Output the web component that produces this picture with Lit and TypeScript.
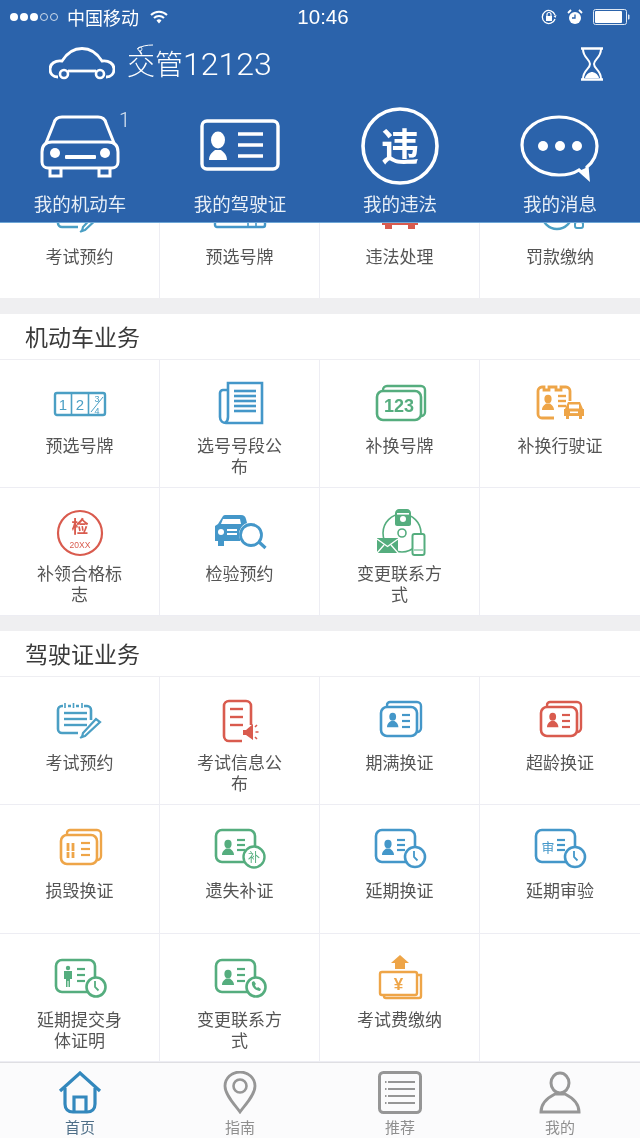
import { LitElement, html, css, svg } from "lit";
import { customElement } from "lit/decorators.js";

const lines = (x1: number, x2: number, ys: number[], w = 2.4) =>
  ys.map((y) => svg`<line x1=${x1} x2=${x2} y1=${y} y2=${y} stroke="currentColor" stroke-width=${w}/>`);

const person = (x: number, y: number, s = 1) => svg`
  <g transform="translate(${x} ${y}) scale(${s})" fill="currentColor">
    <ellipse cx="6" cy="4" rx="3.6" ry="4.2"/>
    <path d="M0 15c0-4 3-5.5 4-6.5h4c1 1 4 2.5 4 6.5z"/>
  </g>`;

const badgeClock = (cx: number, cy: number, r = 10) => svg`
  <circle cx=${cx} cy=${cy} r=${r} fill="#fff" stroke="currentColor" stroke-width="2.6"/>
  <path d="M${cx - 1} ${cy - 6}v6l3.5 3.5" fill="none" stroke="currentColor" stroke-width="1.8"/>`;

const idCard = (inner: unknown, x = 6, y = 5, w = 40, h = 32) => svg`
  <rect x=${x} y=${y} width=${w} height=${h} rx="6" fill="#fff" stroke="currentColor" stroke-width="2.6"/>${inner}`;

const stack = (inner: unknown) => svg`
  <path d="M17 9V7a3 3 0 0 1 3-3h27a4 4 0 0 1 4 4v22a4 4 0 0 1-4 4h-2" fill="none" stroke="currentColor" stroke-width="2.4"/>
  <rect x="11" y="9" width="36" height="29" rx="6" fill="#fff" stroke="currentColor" stroke-width="2.6"/>${inner}`;

const smallCar = (x: number, y: number, fill: string) => svg`
  <g transform="translate(${x} ${y})" fill=${fill}>
    <path d="M4 0h12l3 7h1v7h-2v3h-3v-3H5v3H2v-3H0V7h1z"/>
    <rect x="5" y="2.5" width="10" height="4" fill="#fff"/>
    <rect x="6" y="9.5" width="8" height="1.6" fill="#fff"/>
  </g>`;

const ICONS: Record<string, unknown> = {
  plate: svg`
    <rect x="5" y="12" width="50" height="22" rx="2" fill="none" stroke="currentColor" stroke-width="2.4"/>
    <path d="M21.5 12v22M38.5 12v22" stroke="currentColor" stroke-width="1.6"/>
    <text x="13" y="29" class="t-mono" font-size="15" text-anchor="middle" fill="currentColor">1</text>
    <text x="30" y="29" class="t-mono" font-size="15" text-anchor="middle" fill="currentColor">2</text>
    <text x="47" y="21" class="t-mono" font-size="9" text-anchor="middle" fill="currentColor">3</text>
    <text x="47" y="33" class="t-mono" font-size="9" text-anchor="middle" fill="currentColor">4</text>
    <path d="M41 31l12-15" stroke="currentColor" stroke-width="1"/>`,
  news: svg`
    <path d="M18 9h-5a3 3 0 0 0-3 3v24c0 4 3 6 6 6h36V2H18v34c0 3-1 5-3 6" fill="none" stroke="currentColor" stroke-width="2.6"/>
    ${lines(24, 46, [10, 15, 20, 25, 30], 2.6)}`,
  num: svg`
    <path d="M13 10V9a4 4 0 0 1 4-4h34a4 4 0 0 1 4 4v22a4 4 0 0 1-4 4h-1" fill="none" stroke="currentColor" stroke-width="2.4"/>
    <rect x="7" y="10" width="44" height="29" rx="6" fill="#fff" stroke="currentColor" stroke-width="2.6"/>
    <text x="29" y="31" class="t-sans" font-size="18" font-weight="700" text-anchor="middle" fill="currentColor">123</text>`,
  licence: svg`
    <path d="M24 37H12a4 4 0 0 1-4-4V10a4 4 0 0 1 4-4h2v3h5V6h7v3h5V6h5a4 4 0 0 1 4 4v10" fill="none" stroke="currentColor" stroke-width="2.8"/>
    ${person(12, 14, 1)}
    ${lines(28, 36, [15, 20, 25], 2.4)}
    ${smallCar(34, 21, "currentColor")}`,
  stamp: svg`
    <circle cx="30" cy="24" r="22" fill="none" stroke="currentColor" stroke-width="2.2"/>
    <text x="30" y="24" class="t-cjk" font-size="17" font-weight="700" text-anchor="middle" fill="currentColor">检</text>
    <text x="30" y="38.500" class="t-sans" font-size="8.500" text-anchor="middle" fill="currentColor">20XX</text>`,
  carSearch: svg`
    <path d="M13 7a3 3 0 0 1 3-1h15c3 0 4 1 5 4l1 4a12 12 0 0 0-7 16v2H14v5H8v-5H5V17l3-2z" fill="currentColor"/>
    <path d="M13 10h17l1 5H11z" fill="#fff"/>
    <circle cx="11" cy="23" r="3" fill="#fff"/>
    <rect x="17" y="20" width="10" height="2" fill="#fff"/>
    <rect x="17" y="24" width="10" height="2" fill="#fff"/>
    <circle cx="41" cy="26" r="10.500" fill="#fff" stroke="currentColor" stroke-width="2.800"/>
    <path d="M49 33l6.500 6" stroke="currentColor" stroke-width="3.200"/>`,
  contact: svg`
    <circle cx="32" cy="24" r="19" fill="none" stroke="currentColor" stroke-width="1.600"/>
    <path d="M25 4c0-2 2-4 4-4h8c2 0 4 2 4 4v11c0 1-1 2-2 2H27c-1 0-2-1-2-2z" fill="currentColor"/>
    <rect x="27" y="4" width="12" height="1.600" fill="#fff"/>
    <circle cx="33" cy="10" r="3" fill="#fff"/>
    <circle cx="32" cy="24" r="4" fill="#fff" stroke="currentColor" stroke-width="1.600"/>
    <rect x="7" y="29" width="21" height="15" fill="currentColor"/>
    <path d="M7 30l10.500 7.500L28 30M7 44l7-8M28 44l-7-8" fill="none" stroke="#fff" stroke-width="1.300"/>
    <rect x="42.500" y="25" width="12" height="21" rx="2" fill="#fff" stroke="currentColor" stroke-width="2"/>
    <path d="M44 41h9" stroke="currentColor" stroke-width="1"/>`,
  notepad: svg`
    <path d="M13 8H12a4 4 0 0 0-4 4v19a4 4 0 0 0 4 4h16M18 8h3M26 8h3M34 8h3a4 4 0 0 1 4 4v10" fill="none" stroke="currentColor" stroke-width="2.6"/>
    <path d="M15 5v5M23.500 5v5M32 5v5" stroke="currentColor" stroke-width="1.6"/>
    ${lines(14, 37, [15, 21, 27], 2.4)}
    <path d="M35 38l-3 1 1-4 13-14 4 3z" fill="none" stroke="currentColor" stroke-width="2.200"/>
    <path d="M30 40l2-2" stroke="currentColor" stroke-width="1.500"/>`,
  doc: svg`
    <path d="M32 43H19a5 5 0 0 1-5-5V8a5 5 0 0 1 5-5h17a5 5 0 0 1 5 5v19" fill="none" stroke="currentColor" stroke-width="2.6"/>
    ${lines(20, 33, [11, 19, 27], 2.4)}
    <path d="M33 32h3l7-6v16l-7-5h-3z" fill="currentColor"/>
    <path d="M45 29l2-2M45.500 34h3M45 39l2 2" stroke="currentColor" stroke-width="1.600"/>`,
  idBlue: stack(svg`${person(17, 15, 0.95)}${lines(32, 40, [17, 23, 29], 2.2)}`),
  idRed: stack(svg`${person(17, 15, 0.95)}${lines(32, 40, [17, 23, 29], 2.2)}`),
  broken: stack(svg`
    <path d="M18 17v15M23 17v15" stroke="currentColor" stroke-width="2.8" stroke-dasharray="8 1"/>
    ${lines(31, 40, [17, 23, 29], 2.2)}`),
  idBu: svg`${idCard(svg`${person(12, 14, 1)}${lines(27, 35, [14, 19, 24], 2.2)}`, 6, 4, 39, 32)}
    <circle cx="44" cy="31" r="10.500" fill="#fff" stroke="currentColor" stroke-width="2.400"/>
    <text x="44" y="35.500" class="t-cjk" font-size="12" text-anchor="middle" fill="currentColor">补</text>`,
  idClock: svg`${idCard(svg`${person(12, 14, 1)}${lines(27, 35, [14, 19, 24], 2.2)}`, 6, 4, 39, 32)}${badgeClock(45, 31)}`,
  idShen: svg`${idCard(svg`
    <text x="18" y="26" class="t-cjk" font-size="13" text-anchor="middle" fill="currentColor">审</text>
    ${lines(27, 35, [14, 19, 24], 2.2)}`, 6, 4, 39, 32)}${badgeClock(45, 31)}`,
  idBody: svg`${idCard(svg`
    <g fill="currentColor"><circle cx="18" cy="13" r="2.200"/><path d="M14 16h8v8h-2v8h-1.500v-6h-1v6H16v-8h-2z"/></g>
    ${lines(27, 35, [14, 20, 26], 2.2)}`, 6, 5, 39, 32)}${badgeClock(46, 32, 9.500)}`,
  idPhone: svg`${idCard(svg`${person(12, 15, 1)}${lines(27, 35, [14, 20, 26], 2.2)}`, 6, 5, 39, 32)}
    <circle cx="46" cy="32" r="9.500" fill="#fff" stroke="currentColor" stroke-width="2.600"/>
    <path d="M42 27c-1 4 3 9 8 9l1-2-3-2-1 1c-1-1-2-2-2-3l1-1-2-3z" fill="currentColor"/>`,
  money: svg`
    <path d="M30 0l9 8h-4v6H25V8h-4z" fill="currentColor"/>
    <path d="M47 20h4v21a2 2 0 0 1-2 2H16a2 2 0 0 1-2-2v-1" fill="none" stroke="currentColor" stroke-width="2.400"/>
    <rect x="10" y="17" width="37" height="23" rx="2" fill="#fff" stroke="currentColor" stroke-width="2.400"/>
    <text x="28.500" y="35" class="t-sans" font-size="17" font-weight="700" text-anchor="middle" fill="currentColor">¥</text>`,
  topPlate: svg`
    <rect x="5" y="12" width="50" height="23" rx="2" fill="none" stroke="currentColor" stroke-width="2.4"/>
    <path d="M38 28v7M46 28v7" stroke="currentColor" stroke-width="1.600"/>`,
  topCar: svg`
    <path d="M12 26h36v7h-3v4h-7v-4H22v4h-7v-4h-3z" fill="currentColor"/>`,
  topFine: svg`
    <circle cx="27" cy="22" r="15" fill="none" stroke="currentColor" stroke-width="2.400"/>
    <rect x="45" y="30" width="8" height="6" rx="2" fill="none" stroke="currentColor" stroke-width="2"/>`,
};
ICONS.topPad = ICONS.notepad;

type Cell = { icon: string; color: string; label: string } | null;

const TOP: Cell[] = [
  { icon: "topPad", color: "c-teal", label: "考试预约" },
  { icon: "topPlate", color: "c-blue", label: "预选号牌" },
  { icon: "topCar", color: "c-red", label: "违法处理" },
  { icon: "topFine", color: "c-teal", label: "罚款缴纳" },
];
const VEHICLE: Cell[] = [
  { icon: "plate", color: "c-teal", label: "预选号牌" },
  { icon: "news", color: "c-blue", label: "选号号段公布" },
  { icon: "num", color: "c-green", label: "补换号牌" },
  { icon: "licence", color: "c-orange", label: "补换行驶证" },
  { icon: "stamp", color: "c-red", label: "补领合格标志" },
  { icon: "carSearch", color: "c-blue", label: "检验预约" },
  { icon: "contact", color: "c-green", label: "变更联系方式" },
  null,
];
const DRIVER: Cell[] = [
  { icon: "notepad", color: "c-teal", label: "考试预约" },
  { icon: "doc", color: "c-red", label: "考试信息公布" },
  { icon: "idBlue", color: "c-blue", label: "期满换证" },
  { icon: "idRed", color: "c-red", label: "超龄换证" },
  { icon: "broken", color: "c-orange", label: "损毁换证" },
  { icon: "idBu", color: "c-green", label: "遗失补证" },
  { icon: "idClock", color: "c-blue", label: "延期换证" },
  { icon: "idShen", color: "c-blue", label: "延期审验" },
  { icon: "idBody", color: "c-green", label: "延期提交身体证明" },
  { icon: "idPhone", color: "c-green", label: "变更联系方式" },
  { icon: "money", color: "c-orange", label: "考试费缴纳" },
  null,
];

const NAV = [
  {
    label: "我的机动车",
    icon: svg`
      <path d="M11 33l8-20c1-4 4-6 8-6h36c4 0 7 2 8 6l8 20" fill="none" stroke="#fff" stroke-width="3"/>
      <path d="M7 42c0-6 3-10 10-10h56c7 0 10 4 10 10v10c0 4-3 6-6 6H13c-3 0-6-2-6-6z" fill="none" stroke="#fff" stroke-width="3"/>
      <circle cx="20" cy="43" r="5" fill="#fff"/><circle cx="70" cy="43" r="5" fill="#fff"/>
      <rect x="30" y="45" width="31" height="4" rx="1" fill="#fff"/>
      <path d="M15 58v8h11v-8M64 58v8h11v-8" fill="none" stroke="#fff" stroke-width="3"/>`,
  },
  {
    label: "我的驾驶证",
    icon: svg`
      <rect x="7" y="11" width="76" height="48" rx="5" fill="none" stroke="#fff" stroke-width="3.4"/>
      <ellipse cx="23" cy="30" rx="7" ry="8.500" fill="#fff"/>
      <path d="M14 50c0-6 4-8 6-10h6c2 2 6 4 6 10z" fill="#fff"/>
      <path d="M43 24h25M43 35h25M43 46h25" stroke="#fff" stroke-width="3.400"/>`,
  },
  {
    label: "我的违法",
    icon: svg`
      <circle cx="45" cy="36" r="37" fill="none" stroke="#fff" stroke-width="3.600"/>
      <text x="45" y="50" class="t-cjk" font-size="38" font-weight="700" text-anchor="middle" fill="#fff">违</text>`,
  },
  {
    label: "我的消息",
    icon: svg`
      <path d="M64 60c-6 4-13 5-20 5-20 0-37-13-37-30S24 7 44 7s38 13 38 29c0 9-4 16-10 21l1 11z" fill="none" stroke="#fff" stroke-width="3.200"/>
      <path d="M64 61l9-4 1 11z" fill="#fff"/>
      <circle cx="28" cy="36" r="5" fill="#fff"/><circle cx="45" cy="36" r="5" fill="#fff"/><circle cx="62" cy="36" r="5" fill="#fff"/>`,
  },
];

const TABS = [
  {
    label: "首页",
    on: true,
    icon: svg`
      <path d="M3 20L23 2l20 18" fill="none" stroke="currentColor" stroke-width="3.200"/>
      <path d="M8 17v16c0 5 3 8 8 8h14c5 0 8-3 8-8V17" fill="none" stroke="currentColor" stroke-width="3.200"/>
      <path d="M17 41V26h12v15" fill="none" stroke="currentColor" stroke-width="3.200"/>`,
  },
  {
    label: "指南",
    on: false,
    icon: svg`
      <path d="M23 41C18 34 8 24 8 15a15 14 0 0 1 30 0c0 9-10 19-15 26z" fill="none" stroke="currentColor" stroke-width="2.800"/>
      <circle cx="23" cy="15" r="6.500" fill="none" stroke="currentColor" stroke-width="2.600"/>`,
  },
  {
    label: "推荐",
    on: false,
    icon: svg`
      <rect x="2.500" y="1.500" width="41" height="40" rx="4" fill="none" stroke="currentColor" stroke-width="3"/>
      <path d="M11 11h27M11 18h27M11 25h27M11 32h27" stroke="currentColor" stroke-width="2.200"/>
      <path d="M8 11h1.500M8 18h1.500M8 25h1.500M8 32h1.500" stroke="currentColor" stroke-width="2.200"/>`,
  },
  {
    label: "我的",
    on: false,
    icon: svg`
      <ellipse cx="23" cy="12" rx="9" ry="10" fill="none" stroke="currentColor" stroke-width="3"/>
      <path d="M4 41c0-10 8-15 14-18h10c6 3 14 8 14 18z" fill="none" stroke="currentColor" stroke-width="3"/>`,
  },
];

@customElement("app-root")
export class AppRoot extends LitElement {
  static styles = css`
    :host {
      display: flex;
      flex-direction: column;
      width: 640px;
      height: 1138px;
      overflow: hidden;
      background: #fff;
      font-family: "Noto Sans CJK SC", "Noto Sans", sans-serif;
      filter: blur(0.4px);
    }
    .t-cjk { font-family: "Noto Sans CJK SC", sans-serif; }
    .t-sans { font-family: "Liberation Sans", sans-serif; }
    .t-mono { font-family: "Liberation Sans", sans-serif; }
    header {
      flex: none;
      height: 222px;
      background: #2b63ab;
      border-bottom: 1px solid #6ea6d6;
      color: #fff;
      display: flex;
      flex-direction: column;
    }
    .status {
      height: 34px;
      padding: 0 10px 0 10px;
      display: grid;
      grid-template-columns: 1fr auto 1fr;
      align-items: center;
    }
    .status-left { display: flex; align-items: center; gap: 2px; font-size: 18px; }
    .dot { width: 8px; height: 8px; border-radius: 50%; background: #fff; box-sizing: border-box; }
    .dot.off { background: none; border: 1px solid #cfdcec; }
    .carrier { margin: 0 9px 0 7px; line-height: 24px; }
    .time { font: 20.500px "Liberation Sans", sans-serif; padding-left: 6px; }
    .status-right { display: flex; justify-content: flex-end; align-items: center; gap: 10px; }
    .brand {
      height: 60px;
      padding: 0 35px 0 49px;
      display: flex;
      align-items: center;
    }
    .title {
      position: relative;
      margin-left: 12px;
      font-size: 28px;
      line-height: 38px;
      padding-bottom: 2px;
      font-weight: 300;
      flex: 1;
    }
    .title b { font: 300 32px Roboto, sans-serif; }
    .swoosh { position: absolute; left: 9px; top: 0; }
    .nav { display: grid; grid-template-columns: repeat(4, 1fr); padding-top: 16px; }
    .nav-item { position: relative; display: flex; flex-direction: column; align-items: center; }
    .nav-item svg { display: block; overflow: visible; }
    .nav-label { margin-top: 8px; font-size: 18.500px; line-height: 24px; color: #e8eff7; }
    .count { position: absolute; left: 119px; top: -1px; font: 300 20px Roboto, sans-serif; line-height: 22px; color: #dbe6f2; }
    main { flex: 1; min-height: 0; display: flex; flex-direction: column; }
    .band { height: 16px; background: #efeff1; flex: none; }
    .band.b15 { height: 15px; }
    .sect {
      height: 46px;
      box-sizing: border-box;
      padding-left: 25px;
      font-size: 23px;
      line-height: 44px;
      color: #3a3a3a;
      border-bottom: 1px solid #eeeef2;
      flex: none;
    }
    .grid { display: grid; grid-template-columns: repeat(4, 1fr); grid-auto-rows: 128px; flex: none; }
    .grid.top { grid-auto-rows: 75px; }
    .grid.last { grid-template-rows: 128px 129px 128px; }
    .cell {
      box-sizing: border-box;
      border-right: 1px solid #ededf3;
      border-bottom: 1px solid #ededf3;
      padding-top: 21px;
      display: flex;
      flex-direction: column;
      align-items: center;
    }
    .grid .cell:nth-child(4n) { border-right: none; }
    .grid.top .cell { padding-top: 0; border-bottom: none; }
    .icon { height: 48px; flex: none; }
    .icon svg { display: block; }
    .grid.top .icon { height: 17px; overflow: hidden; display: flex; align-items: flex-end; }
    .grid.top .icon svg { flex: none; }
    .label {
      margin-top: 6px;
      width: 88px;
      text-align: center;
      font-size: 17px;
      line-height: 20.500px;
      color: #555;
    }
    .c-teal { color: #4b9fc4; }
    .c-blue { color: #4497c9; }
    .c-green { color: #55ad7e; }
    .c-orange { color: #eea548; }
    .c-red { color: #d95b4e; }
    .tabs {
      flex: none;
      height: 76px;
      box-sizing: border-box;
      border-top: 1px solid #dfdfe3;
      background: #fbfbfc;
      display: grid;
      grid-template-columns: repeat(4, 1fr);
    }
    .tab { display: flex; flex-direction: column; align-items: center; padding-top: 8px; color: #969696; }
    .tab svg { display: block; }
    .tab.on { color: #3388bd; }
    .tab-label { margin-top: 3px; font-size: 15px; line-height: 20px; color: #8f8f8f; }
    .tab.on .tab-label { color: #4f6f88; }
  `;

  private renderCell(c: Cell) {
    if (!c) return html`<div class="cell"></div>`;
    return html`<div class="cell">
      <div class="icon ${c.color}">
        <svg width="60" height="48" viewBox="0 0 60 48">${ICONS[c.icon]}</svg>
      </div>
      <div class="label">${c.label}</div>
    </div>`;
  }

  render() {
    return html`
      <header>
        <div class="status">
          <div class="status-left">
            <span class="dot"></span><span class="dot"></span><span class="dot"></span>
            <span class="dot off"></span><span class="dot off"></span>
            <span class="carrier">中国移动</span>
            <svg width="18" height="14" viewBox="0 0 18 14">
              <path d="M1 5a11.500 11.500 0 0 1 16 0M4 8a7 7 0 0 1 10 0" fill="none" stroke="#fff" stroke-width="2"/>
              <path d="M6.500 10.500a3.500 3.500 0 0 1 5 0L9 13.500z" fill="#fff"/>
            </svg>
          </div>
          <div class="time">10:46</div>
          <div class="status-right">
            <svg width="16" height="16" viewBox="0 0 16 16">
              <path d="M14 10A6.500 6.500 0 1 1 14 6" fill="none" stroke="#fff" stroke-width="1.300"/>
              <path d="M15.500 6l-3 1 2 2z" fill="#fff"/>
              <rect x="5" y="7" width="6" height="5" fill="#fff"/>
              <path d="M6 7V5.500a2 2 0 0 1 4 0V7" fill="none" stroke="#fff" stroke-width="1.200"/>
            </svg>
            <svg width="16" height="16" viewBox="0 0 16 16">
              <circle cx="8" cy="9" r="6" fill="#fff"/>
              <path d="M8 5.500V9H5" fill="none" stroke="#2b63ab" stroke-width="1.300"/>
              <path d="M1 4l3-3M15 4l-3-3" stroke="#fff" stroke-width="1.800"/>
            </svg>
            <svg width="37" height="16" viewBox="0 0 37 16">
              <rect x="0.500" y="0.500" width="33" height="15" rx="2" fill="none" stroke="#dfe8f3"/>
              <rect x="2" y="2" width="27" height="12" rx="1" fill="#fff"/>
              <path d="M35 5.500c1 0 1.500.5 1.500 1v3c0 .5-.5 1-1.500 1z" fill="#dfe8f3"/>
            </svg>
          </div>
        </div>
        <div class="brand">
          <svg width="66" height="34" viewBox="0 0 66 34">
            <path d="M9 30C4 30 1 27 1 22s5-9 12-8C18 6 25 1.500 33 1.500S48 6 53 14c7-1 12 3 12 8s-3 8-8 8" fill="none" stroke="#fff" stroke-width="2.800"/>
            <circle cx="15" cy="27" r="4" fill="none" stroke="#fff" stroke-width="2.600"/>
            <circle cx="51" cy="27" r="4" fill="none" stroke="#fff" stroke-width="2.600"/>
            <path d="M19 24h28" stroke="#fff" stroke-width="2.800"/>
          </svg>
          <div class="title">
            交管<b>12123</b>
            <svg class="swoosh" width="18" height="10" viewBox="0 0 18 10">
              <path d="M1 5c4-3 10-4 16-4" fill="none" stroke="#fff" stroke-width="1"/>
              <circle cx="4" cy="5" r="2" fill="none" stroke="#fff" stroke-width="0.800"/>
            </svg>
          </div>
          <svg width="26" height="34" viewBox="0 0 26 34">
            <path d="M2 1.500h22M2 32.500h22" stroke="#fff" stroke-width="2.600"/>
            <path d="M4 2c0 9 7 10 7 15S4 23 4 32M22 2c0 9-7 10-7 15s7 6 7 15" fill="none" stroke="#fff" stroke-width="2"/>
            <path d="M6 31c1-4 5-6 7-6s6 2 7 6z" fill="#fff"/>
          </svg>
        </div>
        <div class="nav">
          ${NAV.map(
            (n, i) => html`<div class="nav-item">
              <svg width="90" height="73" viewBox="0 0 90 73">${n.icon}</svg>
              ${i === 0 ? html`<span class="count">1</span>` : null}
              <div class="nav-label">${n.label}</div>
            </div>`
          )}
        </div>
      </header>
      <main>
        <div class="grid top">${TOP.map((c) => this.renderCell(c))}</div>
        <div class="band"></div>
        <div class="sect">机动车业务</div>
        <div class="grid">${VEHICLE.map((c) => this.renderCell(c))}</div>
        <div class="band b15"></div>
        <div class="sect">驾驶证业务</div>
        <div class="grid last">${DRIVER.map((c) => this.renderCell(c))}</div>
      </main>
      <nav class="tabs">
        ${TABS.map(
          (t) => html`<div class="tab ${t.on ? "on" : ""}">
            <svg width="46" height="43" viewBox="0 0 46 43">${t.icon}</svg>
            <div class="tab-label">${t.label}</div>
          </div>`
        )}
      </nav>
    `;
  }
}
